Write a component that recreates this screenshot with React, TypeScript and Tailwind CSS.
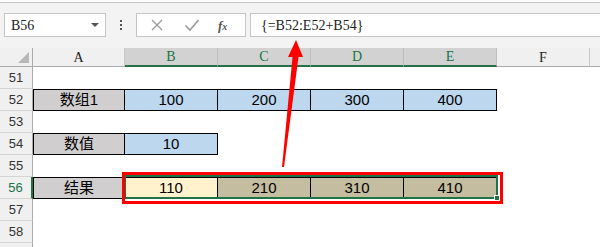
import React from 'react';

const COLS = [
  { key: 'A', w: 'w-[92px]' },
  { key: 'B', w: 'w-[93px]' },
  { key: 'C', w: 'w-[93px]' },
  { key: 'D', w: 'w-[93px]' },
  { key: 'E', w: 'w-[93px]' },
  { key: 'F', w: 'w-[93px]' },
];

const SELECTED = new Set(['B', 'C', 'D', 'E']);

function RowHead({ n, active }: { n?: number; active?: boolean }) {
  return (
    <div
      className={`w-[33px] shrink-0 h-full flex items-center justify-center bg-[#f0f0f0] border-b border-[#d4d4d4] text-[13px] font-['Liberation_Sans',sans-serif] ${
        active ? 'text-[#217346] border-r-2 border-r-[#217346]' : 'text-[#333] border-r border-r-[#ababab]'
      }`}
    >
      {n}
    </div>
  );
}

function Cell({ w, bg, text, cls = '' }: { w: string; bg: string; text: string; cls?: string }) {
  return (
    <div className={`${w} shrink-0 h-full flex items-center justify-center border-black text-[15px] text-black font-['Liberation_Sans','Noto_Sans_CJK_SC',sans-serif] ${bg} ${cls}`}>
      {text}
    </div>
  );
}

function Row({ n, active, children }: { n?: number; active?: boolean; children?: React.ReactNode }) {
  return (
    <div className="flex h-[22px] bg-white">
      <RowHead n={n} active={active} />
      {children}
    </div>
  );
}

export default function App() {
  return (
    <div className="relative w-[600px] h-[247px] overflow-hidden bg-white select-none">
      {/* formula bar */}
      <div className="h-[46px] bg-[#f3f3f3] border-t border-[#c6c6c6] mt-[2px] pt-[10px] flex items-start">
        <div className="ml-[4px] w-[102px] h-[24px] bg-white border border-[#c6c6c6] flex items-center pl-[6px] pr-[6px] justify-between">
          <span className="font-['Liberation_Serif',serif] text-[14px] text-[#222]">B56</span>
          <span className="w-0 h-0 border-l-[4px] border-r-[4px] border-t-[4px] border-l-transparent border-r-transparent border-t-[#555]" />
        </div>
        <div className="w-[30px] h-[24px] flex flex-col items-center justify-center gap-[2px]">
          <span className="w-[2px] h-[2px] bg-[#555]" />
          <span className="w-[2px] h-[2px] bg-[#555]" />
          <span className="w-[2px] h-[2px] bg-[#555]" />
        </div>
        <div className="w-[110px] h-[24px] bg-white border border-[#c6c6c6] flex items-center">
          <svg width="14" height="14" viewBox="0 0 14 14" className="ml-[13px]">
            <path d="M2 2 L12 12 M12 2 L2 12" stroke="#9a9a9a" strokeWidth="1.3" fill="none" />
          </svg>
          <svg width="16" height="14" viewBox="0 0 16 14" className="ml-[20px]">
            <path d="M1.5 7.5 L6 12 L14.5 2" stroke="#9a9a9a" strokeWidth="1.6" fill="none" />
          </svg>
          <span className="ml-[18px] font-['Liberation_Serif',serif] italic font-bold text-[13px] text-[#555] leading-none">
            f<span className="text-[10px]">x</span>
          </span>
        </div>
        <div className="ml-[4px] flex-1 h-[24px] bg-white border border-[#c6c6c6] border-r-0 flex items-center pl-[10px]">
          <span className="font-['Liberation_Serif',serif] text-[14px] text-[#222]">{'{=B52:E52+B54}'}</span>
        </div>
      </div>

      {/* column header */}
      <div className="flex h-[19px] bg-[#f0f0f0] border-b border-[#ababab]">
        <div className="w-[33px] shrink-0 border-r border-[#ababab] relative">
          <span className="absolute right-[3px] bottom-[3px] w-0 h-0" style={{ borderBottom: '11px solid #b8b8b8', borderLeft: '11px solid transparent' }} />
        </div>
        {COLS.map((c) => (
          <div
            key={c.key}
            className={`${c.w} shrink-0 flex items-center justify-center font-['Liberation_Serif',serif] text-[14px] border-r ${
              SELECTED.has(c.key)
                ? 'bg-[#d2d2d2] text-[#217346] border-r-[#bdbdbd] border-b-2 border-b-[#217346] -mb-px'
                : 'text-[#222] border-r-[#c8c8c8]'
            }`}
          >
            {c.key}
          </div>
        ))}
        <div className="flex-1" />
      </div>

      {/* grid */}
      <Row n={51} />
      <Row n={52}>
        <Cell w="w-[92px]" bg="bg-[#d0cece]" text="数组1" cls="border" />
        <Cell w="w-[93px]" bg="bg-[#bdd7ee]" text="100" cls="border-t border-b border-r" />
        <Cell w="w-[93px]" bg="bg-[#bdd7ee]" text="200" cls="border-t border-b border-r" />
        <Cell w="w-[93px]" bg="bg-[#bdd7ee]" text="300" cls="border-t border-b border-r" />
        <Cell w="w-[93px]" bg="bg-[#bdd7ee]" text="400" cls="border-t border-b border-r" />
      </Row>
      <Row n={53} />
      <Row n={54}>
        <Cell w="w-[92px]" bg="bg-[#d0cece]" text="数值" cls="border" />
        <Cell w="w-[93px]" bg="bg-[#bdd7ee]" text="10" cls="border-t border-b border-r" />
      </Row>
      <Row n={55} />
      <Row n={56} active>
        <Cell w="w-[92px]" bg="bg-[#d0cece]" text="结果" cls="border" />
        <Cell w="w-[93px]" bg="bg-[#fff2cc]" text="110" cls="border-t border-b border-r" />
        <Cell w="w-[93px]" bg="bg-[#c4bd9f]" text="210" cls="border-t border-b border-r" />
        <Cell w="w-[93px]" bg="bg-[#c4bd9f]" text="310" cls="border-t border-b border-r" />
        <Cell w="w-[93px]" bg="bg-[#c4bd9f]" text="410" cls="border-t border-b border-r" />
      </Row>
      <Row n={57} />
      <Row n={58} />
      <Row />

      {/* selection */}
      <div className="absolute left-[124px] top-[175px] w-[374px] h-[24px] border-2 border-[#217346] pointer-events-none">
        <div className="absolute -right-[4px] -bottom-[4px] w-[6px] h-[6px] bg-[#217346] border border-white" />
      </div>
      {/* red highlight */}
      <div className="absolute left-[122px] top-[172px] w-[381px] h-[32px] border-[3px] border-[#ff0000] pointer-events-none" />

      {/* arrow */}
      <svg className="absolute left-0 top-0 pointer-events-none" width="600" height="247">
        <polygon points="296,40 303,57 298.5,57 284,167 282,167 292.5,57 288,57" fill="#ff0000" />
      </svg>
    </div>
  );
}
